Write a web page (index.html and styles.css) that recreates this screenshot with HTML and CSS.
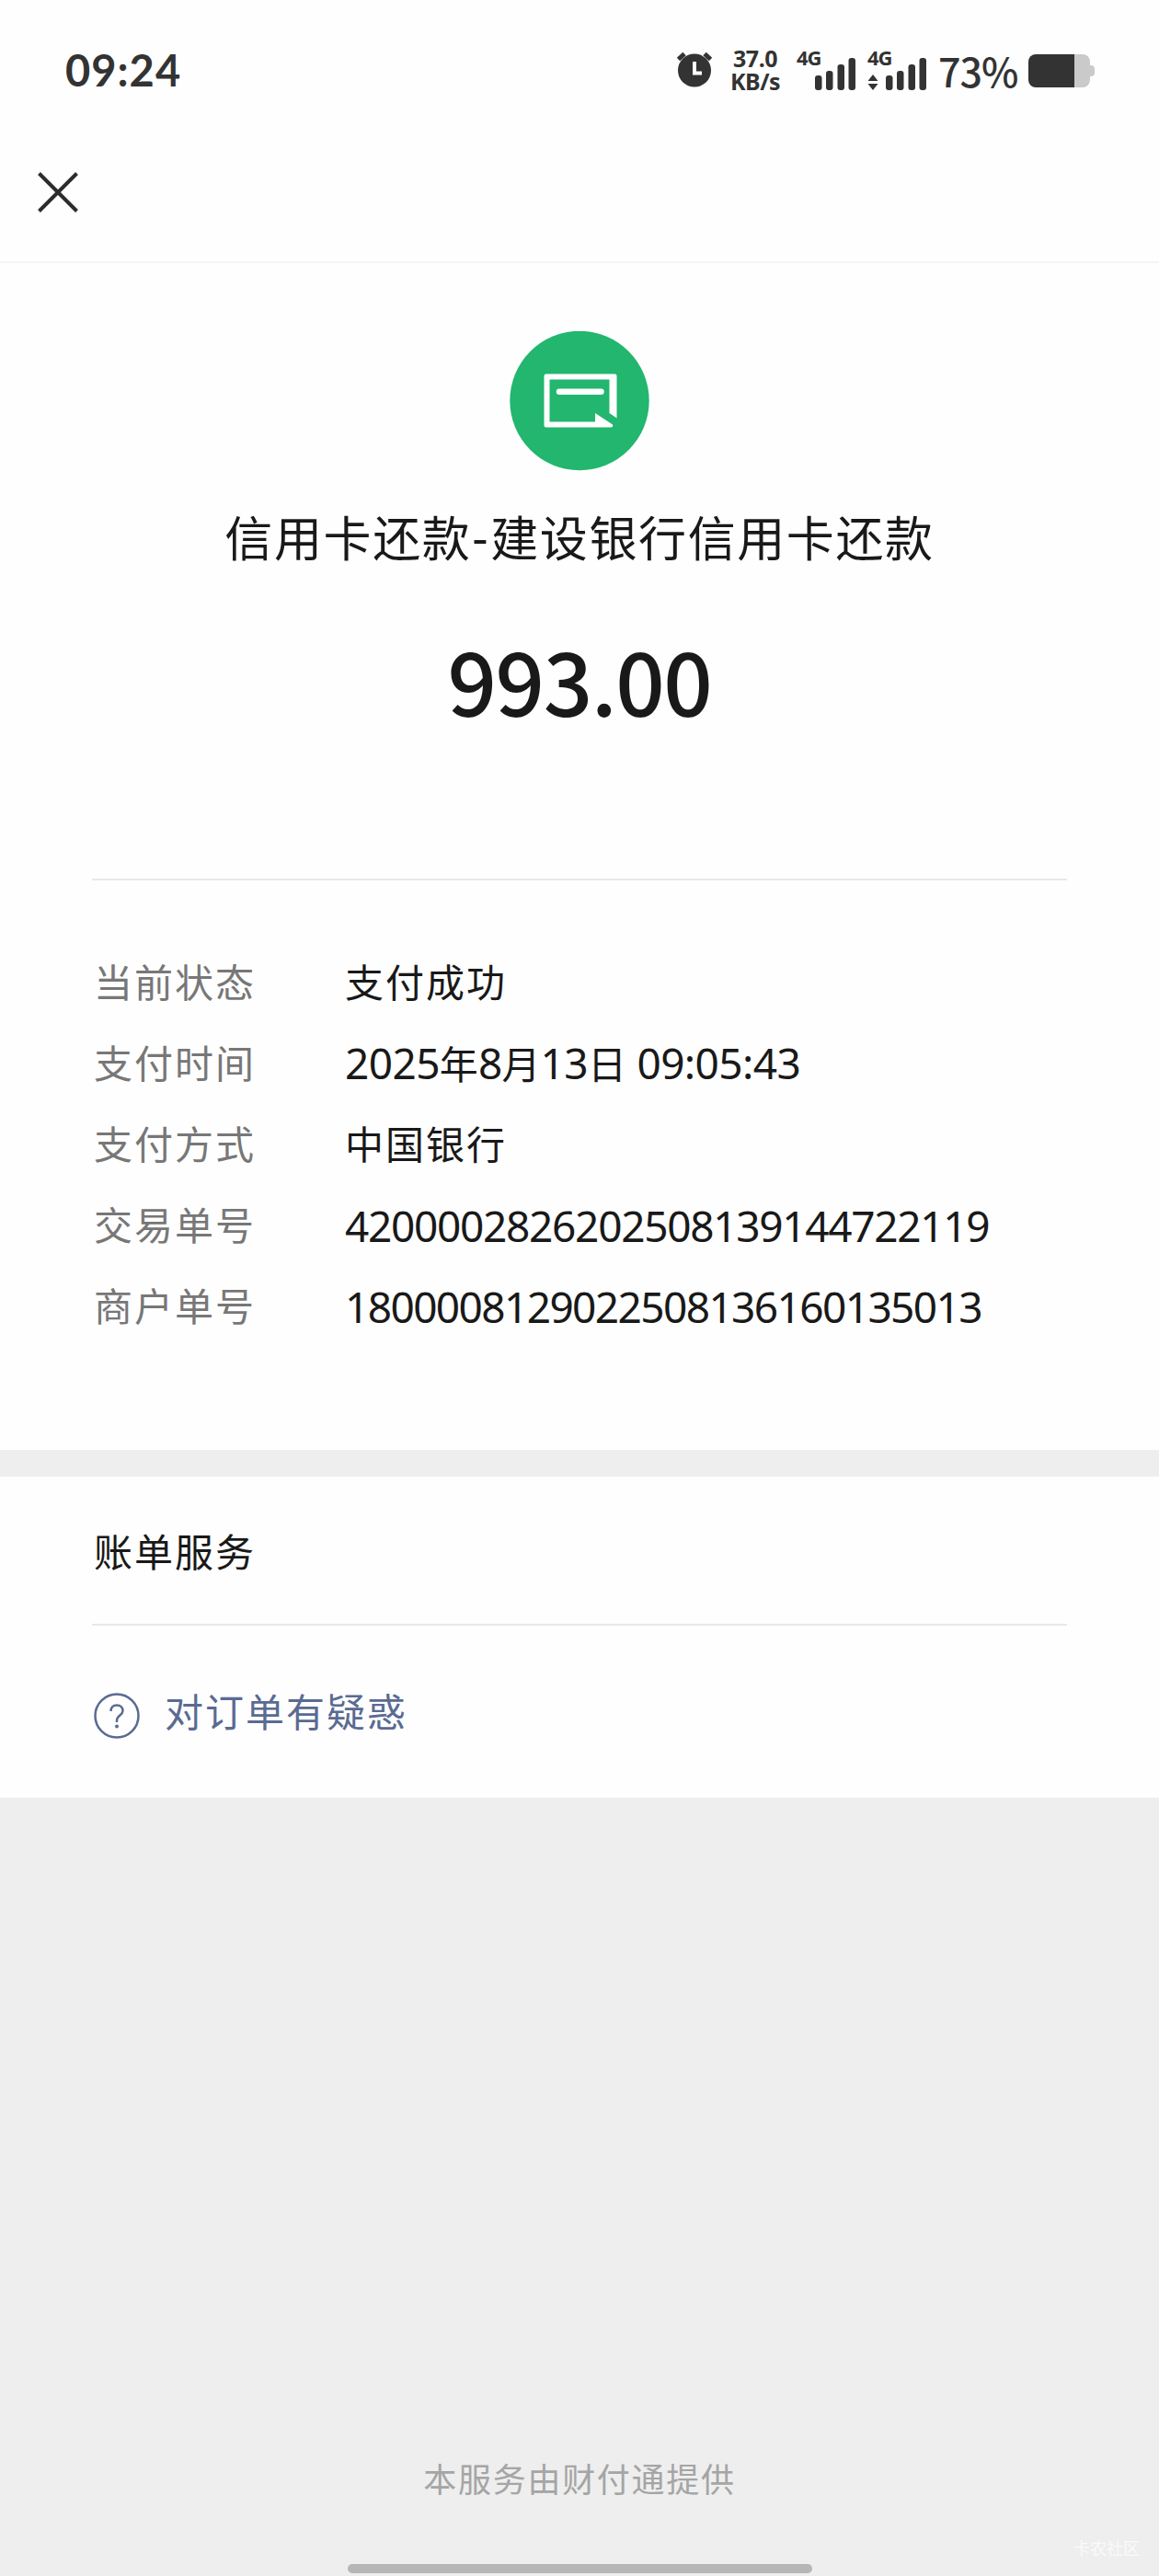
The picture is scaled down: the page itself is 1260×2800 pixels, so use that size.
FILE: index.html
```html
<!DOCTYPE html>
<html lang="zh-CN">
<head>
    <meta charset="UTF-8">
    <meta name="viewport" content="width=device-width, initial-scale=1.0">
    <title>账单详情</title>
    <link rel="stylesheet" href="styles.css">
</head>

<body>
    <div class="status-bar">
        <span class="time">09:24</span>
        <div class="status-icons">
            <svg class="alarm" width="40" height="40" viewBox="0 0 40 40">
                <circle cx="20" cy="20.5" r="18" fill="#333"/>
                <path d="M2.5 8.500L9 2.500M37.500 8.500L31 2.500" stroke="#333" stroke-width="5"/>
                <path d="M20 11v12.500h8" fill="none" stroke="#fff" stroke-width="4"/>
            </svg>
            <div class="speed">
                <span class="speed-num">37.0</span>
                <span class="speed-unit">KB/s</span>
            </div>
            <div class="signal">
                <span class="net">4G</span>
                <svg width="64" height="46" viewBox="0 0 64 46" fill="#333">
                    <rect x="20" y="29" width="7.500" height="16" rx="3"/>
                    <rect x="32" y="24" width="7.500" height="21" rx="3"/>
                    <rect x="44.500" y="17" width="7.500" height="28" rx="3"/>
                    <rect x="56.500" y="10" width="7.500" height="35" rx="3"/>
                </svg>
            </div>
            <div class="signal">
                <span class="net">4G</span>
                <svg width="64" height="46" viewBox="0 0 64 46" fill="#333">
                    <path d="M.5 35L6 28l5.500 7zM.5 38L6 45l5.500-7z"/>
                    <rect x="20" y="29" width="7.500" height="16" rx="3"/>
                    <rect x="32" y="24" width="7.500" height="21" rx="3"/>
                    <rect x="44.500" y="17" width="7.500" height="28" rx="3"/>
                    <rect x="56.500" y="10" width="7.500" height="35" rx="3"/>
                </svg>
            </div>
            <span class="percent">73%</span>
            <svg class="battery" width="72" height="36" viewBox="0 0 72 36">
                <path d="M50 0h9a8 8 0 0 1 8 8v4h1q4 0 4 4v4q0 4-4 4h-1v4a8 8 0 0 1-8 8h-9z" fill="#cacaca"/>
                <path d="M8 0h42v36H8a8 8 0 0 1-8-8V8a8 8 0 0 1 8-8z" fill="#333"/>
            </svg>
        </div>
    </div>

    <div class="nav">
        <svg width="44" height="44" viewBox="0 0 44 44">
            <path d="M1.500 1.500L42.500 42.500M42.500 1.500L1.500 42.500" stroke="#2c2c2c" stroke-width="4"/>
        </svg>
    </div>

    <div class="bill">
        <svg class="logo" width="152" height="152" viewBox="0 0 152 152">
            <circle cx="76" cy="75.500" r="75.700" fill="#22b66e"/>
            <path d="M37.500 48.500q0-2 2-2h75q2 0 2 2v46l-8-5.500V52.500H43.500v46h49.500v-9.500l19 12.500q1 3-2 3H39.500q-2 0-2-2z" fill="#fff"/>
            <path d="M54 65.700h45.500" stroke="#fff" stroke-width="6.500" stroke-linecap="round"/>
        </svg>
        <div class="title">信用卡还款-建设银行信用卡还款</div>
        <div class="amount">993.00</div>
        <div class="details">
            <div class="row">
                <span class="label">当前状态</span>
                <span class="value">支付成功</span>
            </div>
            <div class="row">
                <span class="label">支付时间</span>
                <span class="value number date">2025<span class="unit">年</span>8<span class="unit">月</span>13<span class="unit">日</span> 09:05:43</span>
            </div>
            <div class="row">
                <span class="label">支付方式</span>
                <span class="value">中国银行</span>
            </div>
            <div class="row">
                <span class="label">交易单号</span>
                <span class="value number">4200002826202508139144722119</span>
            </div>
            <div class="row">
                <span class="label">商户单号</span>
                <span class="value number order">1800008129022508136160135013</span>
            </div>
        </div>
    </div>

    <div class="service">
        <div class="service-title">账单服务</div>
        <div class="question">
            <svg width="50" height="50" viewBox="0 0 50 50" fill="none" stroke="#5a6b92" stroke-width="2.500">
                <circle cx="25" cy="25" r="23.500"/>
                <path d="M18.500 20c0-4 2.500-6.500 6.500-6.500s6.500 2.500 6.500 6c0 5-6.500 5-6.500 10.500v2"/>
                <circle cx="25" cy="36.500" r="2" fill="#5a6b92" stroke="none"/>
            </svg>
            <span class="question-text">对订单有疑惑</span>
        </div>
    </div>

    <div class="footer">
        <span class="provider">本服务由财付通提供</span>
        <div class="home-bar"></div>
    </div>
    <div class="watermark">卡农社区</div>
</body>
</html>
```
FILE: styles.css
```css
* {
    box-sizing: border-box;
}

body {
    margin: 0;
    width: 1260px;
    height: 2800px;
    display: flex;
    flex-direction: column;
    position: relative;
    overflow: hidden;
    background: #eee;
    color: #191919;
    font-family: Lato, "Noto Sans CJK SC", sans-serif;
    white-space: nowrap;
}

svg {
    display: block;
    flex: none;
}

.status-bar {
    height: 152px;
    padding: 0 70px 0 71px;
    display: flex;
    justify-content: space-between;
    align-items: center;
    background: #fefefe;
    color: #333;
}

.time {
    font-size: 47px;
    font-weight: bold;
    letter-spacing: 1px;
}

.status-icons {
    height: 60px;
    display: flex;
    align-items: center;
}

.alarm {
    margin-right: 18px;
}

.speed {
    width: 56px;
    margin-right: 17px;
    display: flex;
    flex-direction: column;
    align-items: center;
    font-family: "Noto Sans", sans-serif;
    font-size: 25px;
    font-weight: bold;
    line-height: 25px;
    letter-spacing: -0.5px;
}

.signal {
    position: relative;
    margin-right: 13px;
}

.net {
    position: absolute;
    left: 0;
    top: -2px;
    font-family: "Noto Sans", sans-serif;
    font-size: 22px;
    font-weight: bold;
    line-height: 22px;
    letter-spacing: -1px;
}

.percent {
    width: 84px;
    margin-right: 14px;
    font-family: "Noto Sans CJK SC", sans-serif;
    font-size: 43px;
    font-weight: 500;
    line-height: 60px;
    letter-spacing: -1px;
}

.battery {
    margin-top: 2px;
}

.nav {
    height: 134px;
    padding: 35px 41px;
    background: #fefefe;
    border-bottom: 2px solid #f5f5f5;
}

.bill {
    height: 1290px;
    padding: 74px 100px 0;
    display: flex;
    flex-direction: column;
    align-items: center;
    background: #fefefe;
}

.title {
    margin-top: 33px;
    font-size: 52px;
    line-height: 80px;
    letter-spacing: 1.6px;
}

.amount {
    margin-top: 53px;
    font-family: "Noto Sans CJK SC", sans-serif;
    font-size: 94px;
    font-weight: 500;
    line-height: 120px;
    letter-spacing: -1.5px;
}

.details {
    width: 100%;
    margin-top: 157px;
    padding-top: 64px;
    border-top: 2px solid #e8e8e8;
}

.row {
    height: 88px;
    padding-left: 2px;
    display: flex;
    align-items: center;
    font-size: 42px;
    letter-spacing: 2px;
}

.label {
    width: 273px;
    color: #777;
}

.number {
    padding-top: 5px;
    font-family: "Noto Sans", "Noto Sans CJK SC", sans-serif;
    font-size: 46px;
    letter-spacing: -1.3px;
}

.date {
    padding-top: 3px;
    letter-spacing: -0.6px;
}

.order {
    letter-spacing: -1.6px;
}

.unit {
    font-size: 42px;
    letter-spacing: 0;
}

.service {
    height: 349px;
    margin-top: 29px;
    padding: 0 100px;
    background: #fefefe;
}

.service-title {
    height: 162px;
    padding-left: 2px;
    border-bottom: 2px solid #e8e8e8;
    font-size: 42px;
    line-height: 164px;
    letter-spacing: 2px;
}

.question {
    height: 187px;
    padding: 8px 0 0 2px;
    display: flex;
    align-items: center;
    gap: 27px;
    color: #5a6b92;
    font-size: 42px;
    letter-spacing: 2px;
}

.question-text {
    padding-bottom: 12px;
}

.footer {
    flex: 1;
    display: flex;
    flex-direction: column;
    justify-content: flex-end;
    align-items: center;
    padding-bottom: 3px;
}

.provider {
    margin-bottom: 65px;
    color: #a5a5a5;
    font-size: 36px;
    line-height: 54px;
    letter-spacing: 1.7px;
}

.home-bar {
    width: 505px;
    height: 10px;
    border-radius: 5px;
    background: #b6b6b6;
}

.watermark {
    position: absolute;
    right: 21px;
    bottom: 18px;
    color: #fafafa;
    font-size: 18px;
}
```
